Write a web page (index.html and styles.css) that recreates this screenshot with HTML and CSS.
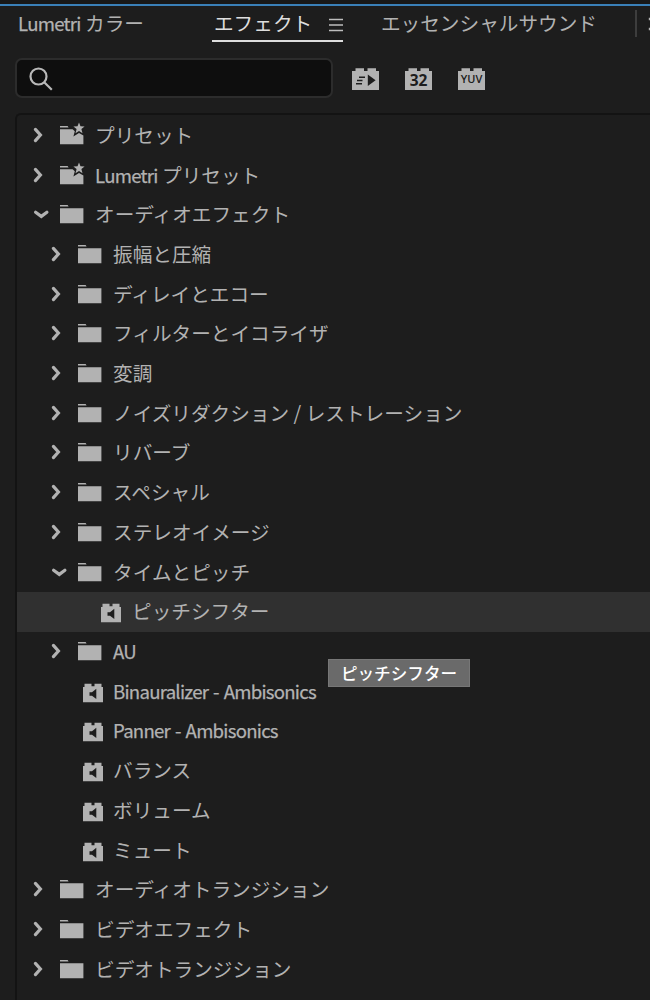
FILE: index.html
```html
<!DOCTYPE html>
<html lang="ja">
<head>
    <meta charset="UTF-8" />
    <meta name="viewport" content="width=device-width, initial-scale=1.0" />
    <title>エフェクト</title>
    <link rel="stylesheet" href="styles.css">
</head>
<body>

<!-- Shared icons -->
<svg class="sprite" aria-hidden="true">
    <symbol id="right" viewBox="0 0 20 20" overflow="visible">
        <path d="M5.4 4.4 L10.4 10 L5.4 15.6" fill="none" stroke="currentColor" stroke-width="3.2" stroke-linecap="round" />
    </symbol>
    <symbol id="down" viewBox="0 0 20 20" overflow="visible">
        <path d="M5.6 8.2 L11.3 12.4 L16.9 8.2" fill="none" stroke="currentColor" stroke-width="3.2" stroke-linecap="round" />
    </symbol>
    <symbol id="folder" viewBox="0 0 24 20" overflow="visible">
        <path d="M0 1 H7.6 L8.6 2.6 H0 Z M0 4.2 H23.4 V19.3 H0 Z" fill="currentColor" />
    </symbol>
    <symbol id="preset" viewBox="0 0 24 20" overflow="visible">
        <path d="M0 1 H7.6 L8.6 2.6 H0 Z M0 4.2 H12.6 L14.8 6.2 L13.4 11.4 L19 8 L23.4 10.6 V19.3 H0 Z" fill="currentColor" />
        <path d="M19 -2.6 L20.5 1.3 L24.6 1.5 L21.4 4.1 L22.5 8.2 L19 5.9 L15.5 8.2 L16.6 4.1 L13.4 1.5 L17.5 1.3 Z" fill="currentColor" />
    </symbol>
    <symbol id="plugin" viewBox="0 0 20 20" overflow="visible">
        <path d="M0 4 H1.5 V0.8 H8.5 V3.2 H11.5 V0.8 H18.5 V4 H20 V19.2 H0 Z" fill="currentColor" />
        <path class="cut" d="M6.5 9.3 H9 L13.3 5.8 V16 L9 12.8 H6.5 Z" />
    </symbol>
    <symbol id="brick" viewBox="0 0 27 22" overflow="visible">
        <path d="M0 3 H3.5 V0.3 H12 V3 H15.5 V0.3 H24 V3 H27 V22 H0 Z" fill="currentColor" />
    </symbol>
</svg>

<div class="panel">
    <nav class="tabs">
        <a class="tab"><span class="latin">Lumetri</span> カラー</a>
        <a class="tab active">エフェクト
            <svg class="menu" viewBox="0 0 14 14"><path d="M0 1.5 H14 M0 7 H14 M0 12.5 H14" stroke="currentColor" stroke-width="1.6" /></svg>
        </a>
        <a class="tab">エッセンシャルサウンド</a>
        <span class="divider"></span>
        <svg class="more" viewBox="0 0 2 20"><path d="M0.8 4 H2 M0.8 14 H2" stroke="currentColor" stroke-width="2.4" /></svg>
    </nav>

    <div class="toolbar">
        <div class="search">
            <svg viewBox="0 0 24 24"><circle cx="9.5" cy="9.5" r="8" /><path d="M15.2 15.2 L22.8 22.8" /></svg>
        </div>
        <div class="filter">
            <svg><use href="#brick" /></svg>
            <svg class="mark" viewBox="0 0 27 22"><path class="cut" d="M15.8 6.5 L23.6 12.2 L15.8 18 Z" /><path class="speed" d="M7 9.3 H13 M5 12.4 H10.5 M4 15.8 H10" /></svg>
        </div>
        <div class="filter"><svg><use href="#brick" /></svg><span class="mark bits">32</span></div>
        <div class="filter"><svg><use href="#brick" /></svg><span class="mark yuv">YUV</span></div>
    </div>

    <div class="tree">
        <div class="row"><svg class="arrow"><use href="#right" /></svg><svg class="folder"><use href="#preset" /></svg>プリセット</div>
        <div class="row"><svg class="arrow"><use href="#right" /></svg><svg class="folder"><use href="#preset" /></svg><span class="latin">Lumetri</span>&nbsp;プリセット</div>
        <div class="row"><svg class="arrow"><use href="#down" /></svg><svg class="folder"><use href="#folder" /></svg>オーディオエフェクト</div>
        <div class="row sub"><svg class="arrow"><use href="#right" /></svg><svg class="folder"><use href="#folder" /></svg>振幅と圧縮</div>
        <div class="row sub"><svg class="arrow"><use href="#right" /></svg><svg class="folder"><use href="#folder" /></svg>ディレイとエコー</div>
        <div class="row sub"><svg class="arrow"><use href="#right" /></svg><svg class="folder"><use href="#folder" /></svg>フィルターとイコライザ</div>
        <div class="row sub"><svg class="arrow"><use href="#right" /></svg><svg class="folder"><use href="#folder" /></svg>変調</div>
        <div class="row sub"><svg class="arrow"><use href="#right" /></svg><svg class="folder"><use href="#folder" /></svg>ノイズリダクション / レストレーション</div>
        <div class="row sub"><svg class="arrow"><use href="#right" /></svg><svg class="folder"><use href="#folder" /></svg>リバーブ</div>
        <div class="row sub"><svg class="arrow"><use href="#right" /></svg><svg class="folder"><use href="#folder" /></svg>スペシャル</div>
        <div class="row sub"><svg class="arrow"><use href="#right" /></svg><svg class="folder"><use href="#folder" /></svg>ステレオイメージ</div>
        <div class="row sub"><svg class="arrow"><use href="#down" /></svg><svg class="folder"><use href="#folder" /></svg>タイムとピッチ</div>
        <div class="row leaf selected"><svg class="plugin"><use href="#plugin" /></svg>ピッチシフター
            <div class="tooltip">ピッチシフター</div>
        </div>
        <div class="row sub"><svg class="arrow"><use href="#right" /></svg><svg class="folder"><use href="#folder" /></svg><span class="latin">AU</span></div>
        <div class="row item"><svg class="plugin"><use href="#plugin" /></svg><span class="latin">Binauralizer - Ambisonics</span></div>
        <div class="row item"><svg class="plugin"><use href="#plugin" /></svg><span class="latin">Panner - Ambisonics</span></div>
        <div class="row item"><svg class="plugin"><use href="#plugin" /></svg>バランス</div>
        <div class="row item"><svg class="plugin"><use href="#plugin" /></svg>ボリューム</div>
        <div class="row item"><svg class="plugin"><use href="#plugin" /></svg>ミュート</div>
        <div class="row"><svg class="arrow"><use href="#right" /></svg><svg class="folder"><use href="#folder" /></svg>オーディオトランジション</div>
        <div class="row"><svg class="arrow"><use href="#right" /></svg><svg class="folder"><use href="#folder" /></svg>ビデオエフェクト</div>
        <div class="row"><svg class="arrow"><use href="#right" /></svg><svg class="folder"><use href="#folder" /></svg>ビデオトランジション</div>
    </div>
</div>

</body>
</html>
```
FILE: styles.css
```css
* {
    box-sizing: border-box;
}
body {
    margin: 0;
    background: #1d1d1d;
    color: #b2b2b2;
    font-family: "Noto Sans CJK JP", sans-serif;
    font-size: 19.65px;
    line-height: 28px;
}
svg {
    display: block;
    flex: none;
    overflow: visible;
}
.sprite {
    position: absolute;
    width: 0;
    height: 0;
}
.cut {
    fill: #1d1d1d;
}
.latin {
    font-size: 18.6px;
    letter-spacing: -0.75px;
    word-spacing: 1.5px;
    -webkit-text-stroke: 0.25px currentColor;
}
.panel {
    height: 1000px;
    overflow: hidden;
    border-top: 4px solid #181818;
    display: flex;
    flex-direction: column;
}

/* Tabs */
.tabs {
    height: 54px;
    flex: none;
    display: flex;
    align-items: flex-start;
    padding: 3px 0 0 18px;
    border-top: 2px solid #3a80b8;
    white-space: nowrap;
}
.tab {
    height: 33px;
    margin-right: 38px;
}
.tab:first-child {
    width: 156px;
}
.tab.active {
    width: 131px;
    padding-left: 2px;
    display: flex;
    justify-content: space-between;
    color: #dedede;
    border-bottom: 2px solid #dedede;
}
.tab.active .menu {
    margin-top: 9px;
    color: #bdbdbd;
}
.menu {
    width: 14px;
    height: 14px;
}
.divider {
    width: 2px;
    height: 27px;
    margin-top: 1px;
    background: #3d3d3d;
}
.more {
    width: 2px;
    height: 20px;
    margin: 6px 0 0 11px;
}

/* Search and filters */
.toolbar {
    height: 53px;
    flex: none;
    display: flex;
    align-items: flex-start;
    padding-left: 15px;
}
.search {
    width: 318px;
    height: 40px;
    margin-right: 19px;
    padding: 7px 0 0 12px;
    background: #0e0e0e;
    border: 2px solid #2c2c2c;
    border-radius: 7px;
}
.search svg {
    width: 24px;
    height: 24px;
    fill: none;
    stroke: #b8b8b8;
    stroke-width: 2.2;
}
.filter {
    position: relative;
    width: 27px;
    height: 22px;
    margin: 10px 26px 0 0;
}
.filter svg {
    width: 27px;
    height: 22px;
}
.mark {
    position: absolute;
    top: 0;
    left: 0;
    width: 27px;
    color: #1d1d1d;
    text-align: center;
}
.speed {
    stroke: #1d1d1d;
    stroke-width: 1.5;
}
.bits {
    top: 2px;
    font: bold 15.5px/20px "Noto Sans", sans-serif;
}
.yuv {
    top: 1px;
    font: 600 11px/20px "Open Sans", sans-serif;
}

/* Effects tree */
.tree {
    flex: 1;
    margin: 2px 0 0 15px;
    padding: 1px 0 0 0;
    border-top: 2px solid #131313;
    border-left: 2px solid #131313;
    border-top-left-radius: 6px;
}
.row {
    height: 39.71px;
    flex: none;
    display: flex;
    align-items: center;
    padding: 0 0 2px 13px;
    white-space: nowrap;
}
.sub {
    padding-left: 31px;
}
.item {
    padding-left: 66px;
}
.leaf {
    padding-left: 84px;
}
.selected {
    position: relative;
    background: #303030;
}
.arrow {
    width: 20px;
    height: 20px;
    margin-right: 10px;
}
.folder {
    width: 24px;
    height: 20px;
    margin-right: 11px;
}
.plugin {
    width: 20px;
    height: 20px;
    margin: 4px 10px 0 0;
}
.leaf .plugin {
    margin-right: 11px;
}
.tooltip {
    position: absolute;
    top: 67px;
    left: 311px;
    width: 142px;
    height: 28px;
    background: #6a6a6a;
    border: 1px solid #777;
    color: #fff;
    font-size: 16.6px;
    font-weight: 500;
    line-height: 26px;
    text-align: center;
}
```
